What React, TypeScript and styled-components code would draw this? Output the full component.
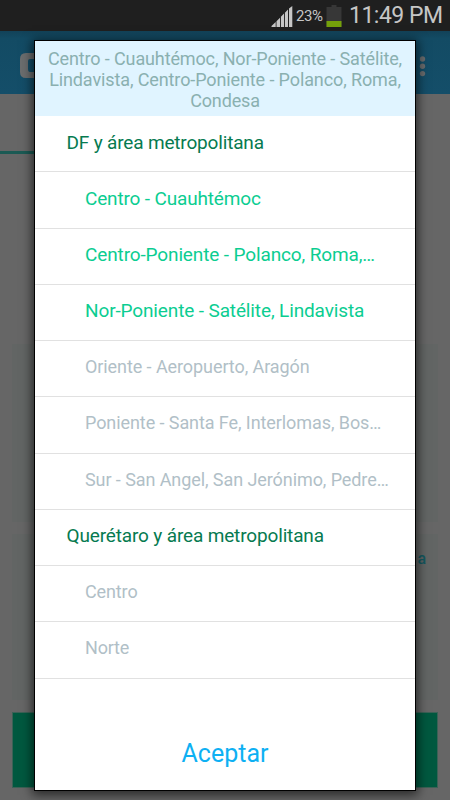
import React from "react";
import styled, { createGlobalStyle } from "styled-components";

const GlobalStyle = createGlobalStyle`
  *, *::before, *::after { box-sizing: border-box; }
  body { margin: 0; font-family: Roboto, "Liberation Sans", sans-serif; }
`;

const Screen = styled.div`
  position: relative;
  display: flex;
  flex-direction: column;
  width: 450px;
  height: 800px;
  overflow: hidden;
  background: #666;
`;

const StatusBar = styled.header`
  display: flex;
  flex: none;
  justify-content: flex-end;
  align-items: flex-start;
  height: 31px;
  padding-right: 8px;
  background: #1f1f1f;
  color: #c6c6c6;
`;

const Signal = styled.svg`
  width: 22px;
  height: 22px;
  margin: 5px 3px 0 0;
`;

const Percent = styled.span`
  width: 27px;
  margin-top: 7px;
  font-size: 15px;
  line-height: 18px;
  letter-spacing: -0.4px;
`;

const Battery = styled.svg`
  width: 16px;
  height: 22px;
  margin: 5px 7px 0 3px;
`;

const Clock = styled.time`
  width: 93px;
  margin-top: 2px;
  font-size: 23px;
  line-height: 27px;
  letter-spacing: -0.5px;
  white-space: nowrap;
`;

const AppBar = styled.div`
  display: flex;
  flex: none;
  justify-content: space-between;
  align-items: center;
  height: 63px;
  padding: 0 24px 0 20px;
  background: linear-gradient(#124258, #134b64 12%, #144e69);
`;

const Logo = styled.svg`
  width: 30px;
  height: 26px;
  margin-top: 7px;
`;

const Overflow = styled.svg`
  width: 7px;
  height: 22px;
  margin-top: 7px;
`;

const TabStrip = styled.div`
  flex: none;
  height: 60px;
  padding-top: 57px;
`;

const ActiveTab = styled.div`
  width: 150px;
  height: 3px;
  background: #1b5a54;
`;

const Content = styled.main`
  display: flex;
  flex-direction: column;
  padding: 190px 12px 0;
`;

const Card = styled.section<{ $height: number; $gap: number }>`
  height: ${(p) => p.$height}px;
  margin-bottom: ${(p) => p.$gap}px;
  padding: 15px 12px;
  background: #626564;
  color: #145860;
  font-size: 16px;
  font-weight: 500;
  line-height: 20px;
  text-align: right;
`;

const Submit = styled.div`
  height: 76px;
  background: #00583f;
  border: 1px solid #3c6156;
`;

const Dialog = styled.div`
  position: absolute;
  top: 40px;
  left: 34px;
  display: flex;
  flex-direction: column;
  width: 382px;
  height: 751px;
  border: 1px solid #000;
  background: #fff;
  box-shadow: 0 2px 10px 2px rgba(0, 0, 0, 0.6);
`;

const Summary = styled.div`
  flex: none;
  height: 75px;
  padding-top: 8px;
  background: #e0f4ff;
  color: #8ab0b0;
  font-size: 18px;
  line-height: 20.8px;
  text-align: center;
`;

const SummaryLine = styled.div<{ $spacing: number }>`
  letter-spacing: ${(p) => p.$spacing}px;
  white-space: nowrap;
`;

type Kind = "group" | "on" | "off";

const tone = { group: "#067a50", on: "#0bcd91", off: "#b1bfc7" };

const Row = styled.div<{ $kind: Kind; $spacing: number }>`
  display: flex;
  flex: none;
  align-items: center;
  height: 56.28px;
  padding: 0 0 ${(p) => (p.$kind === "off" ? 4.2 : 3)}px ${(p) => (p.$kind === "group" ? 31.5 : 50)}px;
  border-bottom: 1px solid #e1e1e1;
  color: ${(p) => tone[p.$kind]};
  font-size: ${(p) => (p.$kind === "off" ? 18 : 19)}px;
  letter-spacing: ${(p) => p.$spacing}px;
  white-space: nowrap;
`;

const Accept = styled.button`
  flex: 1;
  padding: 38px 0 0;
  border: 0;
  background: none;
  color: #0eb0f3;
  font: 400 25px Roboto, sans-serif;
  letter-spacing: 0;
`;

const rows: { text: string; kind: Kind; spacing: number }[] = [
  { text: "DF y área metropolitana", kind: "group", spacing: -0.17 },
  { text: "Centro - Cuauhtémoc", kind: "on", spacing: -0.16 },
  { text: "Centro-Poniente - Polanco, Roma,…", kind: "on", spacing: -0.13 },
  { text: "Nor-Poniente - Satélite, Lindavista", kind: "on", spacing: -0.13 },
  { text: "Oriente - Aeropuerto, Aragón", kind: "off", spacing: -0.08 },
  { text: "Poniente - Santa Fe, Interlomas, Bos…", kind: "off", spacing: -0.08 },
  { text: "Sur - San Angel, San Jerónimo, Pedre…", kind: "off", spacing: -0.08 },
  { text: "Querétaro y área metropolitana", kind: "group", spacing: -0.15 },
  { text: "Centro", kind: "off", spacing: -0.12 },
  { text: "Norte", kind: "off", spacing: -0.2 },
];

export default function App() {
  return (
    <Screen>
      <GlobalStyle />
      <StatusBar>
        <Signal viewBox="0 0 22 22" fill="#c6c6c6">
          <path d="M0.500 22V21L4.700 17V22ZM5.500 22V16.200L9 12.700V22ZM9.900 22V11.700L13 8.600V22ZM13.900 22V7.700L17 4.600V22ZM18 22V3.500L21.300 1V22Z" />
        </Signal>
        <Percent>23%</Percent>
        <Battery viewBox="0 0 16 22">
          <path d="M5.500 0h5v2H15.500v20H.5V2h5z" fill="#373737" />
          <path d="M.5 16h15v6H.5z" fill="#75a10b" />
        </Battery>
        <Clock>11:49 PM</Clock>
      </StatusBar>
      <AppBar>
        <Logo viewBox="0 0 30 26">
          <path fill="#6b6d6e" fillRule="evenodd" d="M6 0H30V6H10Q8 6 8 8V16Q8 19 10 19H30V25H6Q0 25 0 19V6Q0 0 6 0Z" />
        </Logo>
        <Overflow viewBox="0 0 7 22" fill="#686b6d">
          <circle cx="3.500" cy="4" r="2.700" />
          <circle cx="3.500" cy="11.300" r="2.700" />
          <circle cx="3.500" cy="18.600" r="2.700" />
        </Overflow>
      </AppBar>
      <TabStrip>
        <ActiveTab />
      </TabStrip>
      <Content>
        <Card $height={178} $gap={12} />
        <Card $height={166} $gap={12}>a</Card>
        <Submit />
      </Content>
      <Dialog>
        <Summary>
          <SummaryLine $spacing={-0.13}>Centro - Cuauhtémoc, Nor-Poniente - Satélite,</SummaryLine>
          <SummaryLine $spacing={-0.11}>Lindavista, Centro-Poniente - Polanco, Roma,</SummaryLine>
          <SummaryLine $spacing={-0.15}>Condesa</SummaryLine>
        </Summary>
        {rows.map((row) => (
          <Row key={row.text} $kind={row.kind} $spacing={row.spacing}>
            {row.text}
          </Row>
        ))}
        <Accept>Aceptar</Accept>
      </Dialog>
    </Screen>
  );
}
